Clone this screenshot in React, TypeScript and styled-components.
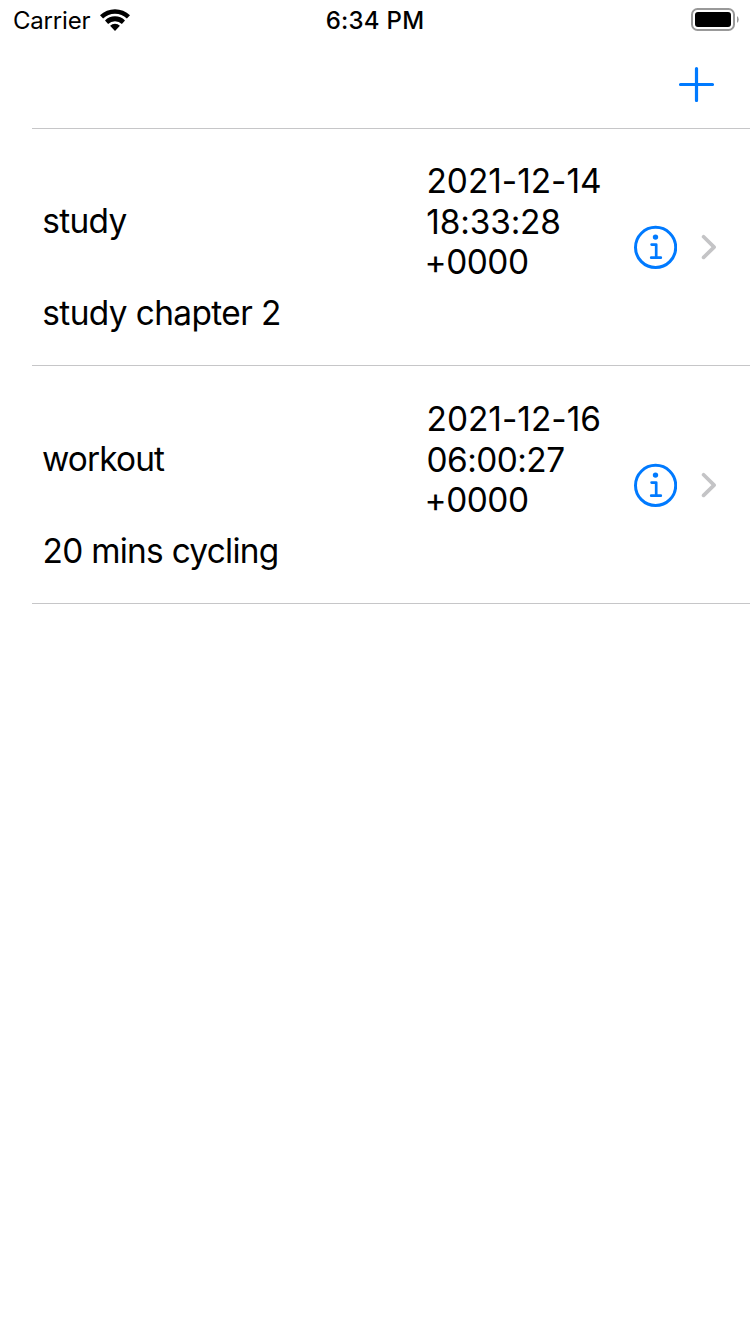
import React from "react";
import styled, { createGlobalStyle } from "styled-components";

const GlobalStyle = createGlobalStyle`
  * { box-sizing: border-box; }
  body {
    margin: 0;
    background: #fff;
    color: #000;
    font-family: Inter, "Liberation Sans", sans-serif;
  }
`;

const Screen = styled.main`
  display: flex;
  flex-direction: column;
  width: 750px;
  height: 1334px;
  background: #fff;
  overflow: hidden;
`;

const StatusBar = styled.header`
  display: grid;
  grid-template-columns: 1fr auto 1fr;
  align-items: center;
  height: 40px;
  padding: 2px 11px 0 13px;
`;

const Carrier = styled.div`
  display: flex;
  align-items: center;
  gap: 10px;
  font-size: 24px;
  line-height: 38px;
  letter-spacing: -0.2px;

  svg {
    margin-bottom: 2px;
  }
`;

const Clock = styled.time`
  padding-right: 2px;
  font-size: 24px;
  line-height: 38px;
  font-weight: 550;
  letter-spacing: 0.25px;
`;

const BatterySlot = styled.div`
  display: flex;
  justify-content: flex-end;
  padding-bottom: 2px;
`;

const NavBar = styled.nav`
  display: flex;
  justify-content: flex-end;
  height: 88px;
  padding: 25px 35px 0 0;
`;

const IconButton = styled.button`
  display: block;
  padding: 0;
  border: 0;
  background: none;
  line-height: 0;
  height: max-content;
`;

const List = styled.ul`
  margin: 0 0 0 32px;
  padding: 0;
  list-style: none;
  border-top: 1px solid #c6c6c8;
`;

const Row = styled.li<{ $height: number }>`
  display: flex;
  align-items: center;
  height: ${(p) => p.$height}px;
  padding: 0 32px 0 10px;
  border-bottom: 1px solid #c6c6c8;
`;

const Content = styled.div`
  display: grid;
  grid-template-columns: 384px 207px;
  grid-template-rows: 121.5px 40.5px;
  row-gap: 10.2px;
  align-items: center;
  align-self: flex-end;
  padding-bottom: 31.8px;
  font-size: 33.4px;
  line-height: 40.5px;
`;

const Label = styled.span<{ $tracking: number; $indent?: number }>`
  display: block;
  white-space: nowrap;
  letter-spacing: ${(p) => p.$tracking}px;
  text-indent: ${(p) => p.$indent ?? 0}px;
`;

const Title = styled(Label)`
  padding-bottom: 1.5px;
`;

const Accessories = styled.div`
  display: flex;
  align-items: center;
  gap: 23px;
`;

const WifiIcon = () => (
  <svg width="30" height="22" viewBox="0 0 30 22">
    <path d="M0 6.2A21.6 21.6 0 0 1 30 6.2L26.9 9.6A17.3 17.3 0 0 0 3.1 9.6Z" />
    <path d="M5 11.5A14.1 14.1 0 0 1 25 11.5L21.9 14.9A10 10 0 0 0 8.1 14.9Z" />
    <path d="M10.1 16.8A7 7 0 0 1 19.9 16.8L15 21.9Z" />
  </svg>
);

const BatteryIcon = () => (
  <svg width="48" height="24" viewBox="0 0 48 24">
    <rect x="1" y="1" width="42" height="21" rx="5.5" fill="none" stroke="#999" strokeWidth="2" />
    <rect x="4" y="4" width="36" height="15" rx="3" />
    <path d="M46 8a4.4 4.4 0 0 1 0 7Z" fill="#999" />
  </svg>
);

const PlusIcon = () => (
  <svg width="37" height="37" viewBox="0 0 37 37" fill="none" stroke="#007aff" strokeWidth="3.2" strokeLinecap="round">
    <path d="M18.5 3.5v32M2.5 19.5h32" />
  </svg>
);

const InfoIcon = () => (
  <svg width="44" height="44" viewBox="0 0 44 44" fill="none" stroke="#007aff" strokeLinecap="round" strokeLinejoin="round">
    <circle cx="22.6" cy="22.4" r="20.1" strokeWidth="3" />
    <circle cx="22.5" cy="12.1" r="2.7" fill="#007aff" stroke="none" />
    <path d="M18.6 19.6h4.6v13M18.2 32.7h9.6" strokeWidth="2.7" />
  </svg>
);

const ChevronIcon = () => (
  <svg width="17" height="26" viewBox="0 0 17 26" fill="none" stroke="#c4c4c6" strokeWidth="3.7" strokeLinecap="round" strokeLinejoin="round">
    <path d="M3.6 2.8 14.1 13.1 3.6 23.4" />
  </svg>
);

type Text = { text: string; tracking: number; indent?: number };
type Task = { height: number; title: Text; date: Text[]; detail: Text };

const tasks: Task[] = [
  {
    height: 237,
    title: { text: "study", tracking: -0.7, indent: 0.3 },
    date: [
      { text: "2021-12-14", tracking: -0.02, indent: 0.5 },
      { text: "18:33:28", tracking: -0.15, indent: 0.3 },
      { text: "+0000", tracking: -0.45, indent: -1.5 },
    ],
    detail: { text: "study chapter 2", tracking: -0.6, indent: 0.3 },
  },
  {
    height: 238,
    title: { text: "workout", tracking: -0.85 },
    date: [
      { text: "2021-12-16", tracking: 0.02, indent: 0.5 },
      { text: "06:00:27", tracking: -0.55, indent: 0.5 },
      { text: "+0000", tracking: -0.45, indent: -1.5 },
    ],
    detail: { text: "20 mins cycling", tracking: -0.72, indent: 0.5 },
  },
];

export default function App() {
  return (
    <>
      <GlobalStyle />
      <Screen>
        <StatusBar>
          <Carrier>
            Carrier
            <WifiIcon />
          </Carrier>
          <Clock>6:34 PM</Clock>
          <BatterySlot>
            <BatteryIcon />
          </BatterySlot>
        </StatusBar>
        <NavBar>
          <IconButton aria-label="Add">
            <PlusIcon />
          </IconButton>
        </NavBar>
        <List>
          {tasks.map((task) => (
            <Row key={task.title.text} $height={task.height}>
              <Content>
                <Title $tracking={task.title.tracking} $indent={task.title.indent}>
                  {task.title.text}
                </Title>
                <div>
                  {task.date.map((part) => (
                    <Label key={part.text} $tracking={part.tracking} $indent={part.indent}>
                      {part.text}
                    </Label>
                  ))}
                </div>
                <Label $tracking={task.detail.tracking} $indent={task.detail.indent}>
                  {task.detail.text}
                </Label>
              </Content>
              <Accessories>
                <IconButton aria-label="Details">
                  <InfoIcon />
                </IconButton>
                <ChevronIcon />
              </Accessories>
            </Row>
          ))}
        </List>
      </Screen>
    </>
  );
}
